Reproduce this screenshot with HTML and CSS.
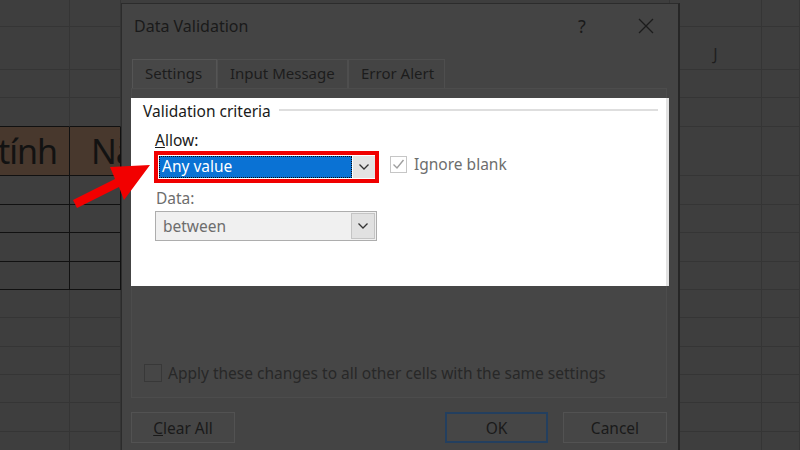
FILE: index.html
```html
<!DOCTYPE html>
<html>
<head>
<meta charset="utf-8">
<title>Data Validation</title>
<link rel="stylesheet" href="styles.css">
</head>
<body>
<div class="sheet">
  <div class="c"></div><div class="c"></div><div class="c"></div><div class="c"></div><div class="c"></div>
  <div class="c"></div><div class="c"></div><div class="c"></div><div class="c colh">J</div><div class="c"></div>
  <div class="c"></div><div class="c"></div><div class="c"></div><div class="c"></div><div class="c"></div>
  <div class="c bb"></div><div class="c bb"></div><div class="c"></div><div class="c"></div><div class="c"></div>
  <div class="c tb hd hd-r"><span>tính</span></div><div class="c tb hd hd-l"><span>Nă</span></div><div class="c"></div><div class="c"></div><div class="c"></div>
  <div class="c tb"></div><div class="c tb"></div><div class="c"></div><div class="c"></div><div class="c"></div>
  <div class="c tb"></div><div class="c tb"></div><div class="c"></div><div class="c"></div><div class="c"></div>
  <div class="c tb"></div><div class="c tb"></div><div class="c"></div><div class="c"></div><div class="c"></div>
  <div class="c tb"></div><div class="c tb"></div><div class="c"></div><div class="c"></div><div class="c"></div>
  <div class="c"></div><div class="c"></div><div class="c"></div><div class="c"></div><div class="c"></div>
  <div class="c"></div><div class="c"></div><div class="c"></div><div class="c"></div><div class="c"></div>
  <div class="c"></div><div class="c"></div><div class="c"></div><div class="c"></div><div class="c"></div>
  <div class="c"></div><div class="c"></div><div class="c"></div><div class="c"></div><div class="c"></div>
  <div class="c"></div><div class="c"></div><div class="c"></div><div class="c"></div><div class="c"></div>
  <div class="c"></div><div class="c"></div><div class="c"></div><div class="c"></div><div class="c"></div>
</div>

<div class="dialog">
  <div class="titlebar">
    <span class="title">Data Validation</span>
    <span class="help">?</span>
    <svg class="close" width="16" height="16" viewBox="0 0 16 16"><path d="M1 1 L15 15 M15 1 L1 15" stroke="#1c1c1c" stroke-width="1.3" fill="none"/></svg>
  </div>
  <div class="tabs">
    <div class="tab tab-set active">Settings</div>
    <div class="tab tab-msg">Input Message</div>
    <div class="tab tab-err">Error Alert</div>
  </div>
  <div class="panel">
    <div class="hl">
      <div class="legend"><span>Validation criteria</span><i class="rule"></i></div>
      <div class="form">
        <div class="lbl"><u>A</u>llow:</div>
        <div class="row">
          <div class="redbox">
            <div class="combo">
              <div class="sel">Any value</div>
              <div class="btn"><svg width="12" height="8" viewBox="0 0 12 8"><path d="M1.5 1.5 L6 6 L10.5 1.5" stroke="#333" stroke-width="1.3" fill="none"/></svg></div>
            </div>
          </div>
          <div class="chk">
            <span class="box"><svg width="15" height="15" viewBox="0 0 15 15"><path d="M2.5 7.5 L6 11 L12.5 3" stroke="#9f9f9f" stroke-width="1.4" fill="none"/></svg></span>
            <span>Ignore blank</span>
          </div>
        </div>
        <div class="lbl dim">Data:</div>
        <div class="combo dis">
          <div class="val">between</div>
          <div class="btn"><svg width="12" height="8" viewBox="0 0 12 8"><path d="M1.5 1.5 L6 6 L10.5 1.5" stroke="#333" stroke-width="1.3" fill="none"/></svg></div>
        </div>
      </div>
    </div>
    <div class="apply"><span class="dbox"></span><span>Apply these changes to all other cells with the same settings</span></div>
  </div>
  <div class="buttons">
    <button class="b"><u>C</u>lear All</button>
    <span class="sp"></span>
    <button class="b ok">OK</button>
    <button class="b">Cancel</button>
  </div>
</div>

<svg class="arrow" width="800" height="450" viewBox="0 0 800 450">
  <polygon points="73,200 115,179 110,167 150,165 124,200 119,187 77,208" fill="#f20000"/>
</svg>
</body>
</html>
```

FILE: styles.css
```css
html, body {
  margin: 0;
  padding: 0;
}
body {
  width: 800px;
  height: 450px;
  overflow: hidden;
  position: relative;
  background: #3e3e3e;
  font-family: "Noto Sans", "DejaVu Sans", sans-serif;
}

/* spreadsheet background */
.sheet {
  display: grid;
  grid-template-columns: 70px 51px 549px 92px 38px;
  grid-template-rows: 27px 43px 28px 29px 49px 29px 28px 29px 28px 28px 29px 28px 28px 29px 27px;
}
.c {
  box-sizing: border-box;
  border-right: 1px solid #353535;
  border-bottom: 1px solid #353535;
}
.bb { border-bottom-color: #111; }
.tb { border-right-color: #111; border-bottom-color: #111; }
.hd {
  background: #48382d;
  font-size: 34px;
  letter-spacing: -1px;
  line-height: 48px;
  color: #121212;
  white-space: nowrap;
  overflow: hidden;
  display: flex;
}
.hd-r { justify-content: flex-end; padding-right: 12px; }
.hd-l { padding-left: 21px; }
.colh {
  display: flex;
  justify-content: center;
  align-items: flex-end;
  padding-bottom: 4px;
  font-size: 16px;
  color: #1e1e1e;
}

/* dialog window */
.dialog {
  position: absolute;
  left: 121px;
  top: 3px;
  width: 559px;
  height: 447px;
  overflow: hidden;
  box-sizing: border-box;
  background: #444444;
  border: 1px solid #2c2c2c;
  border-right: 2px solid #262626;
  border-bottom: none;
  display: flex;
  flex-direction: column;
  color: #1a1a1a;
}
.titlebar {
  height: 44px;
  flex: none;
  display: flex;
  align-items: center;
  padding-left: 12px;
}
.title { font-size: 16px; }
.help {
  margin-left: auto;
  font-size: 18px;
  width: 10px;
  margin-right: 50px;
}
.close { margin-right: 24px; }

.tabs {
  display: flex;
  flex: none;
  margin: 11px 0 0 10px;
  height: 29px;
}
.tab {
  box-sizing: border-box;
  height: 29px;
  line-height: 27px;
  padding-left: 12px;
  font-size: 15px;
  color: #1c1c1c;
  border: 1px solid #4e4e4e;
  border-bottom: none;
}
.tab-set { width: 85px; }
.tab-msg { width: 131px; }
.tab-err { width: 97px; }
.active { background: #474747; border-color: #555; }

.panel {
  flex: none;
  margin-left: 9px;
  width: 536px;
  height: 310px;
  box-sizing: border-box;
  border: 1px solid #4c4c4c;
  background: #464646;
  display: flex;
  flex-direction: column;
}
.hl {
  margin: 9px -3px 0 -1px;
  height: 188px;
  background: #fff;
  box-shadow: inset -3px 0 0 #e2e2e2;
}
.legend {
  height: 26px;
  display: flex;
  align-items: center;
  padding: 0 11px 0 12px;
  font-size: 15.5px;
  color: #1a1a1a;
}
.rule {
  flex: 1;
  height: 2px;
  background: #dedede;
  margin: -2px 0 0 8px;
}
.form { padding-left: 23px; }
.lbl {
  margin-top: 6px;
  line-height: 20px;
  font-size: 15.5px;
  color: #1a1a1a;
  padding-left: 1px;
}
.lbl.dim { margin-top: 5px; color: #6d6d6d; padding-left: 2px; }
.row {
  display: flex;
  align-items: flex-start;
  margin-top: 1px;
}
.redbox {
  width: 225px;
  height: 32px;
  box-sizing: border-box;
  border: 4px solid #f00000;
  background: #fff;
}
.combo {
  display: flex;
  height: 24px;
  box-sizing: border-box;
  padding: 1px 0 1px 1px;
}
.sel {
  flex: 1;
  background: #0a72d4;
  color: #fff;
  font-size: 15.5px;
  line-height: 20px;
  padding-left: 3px;
  outline: 1px dotted #0d0d0d;
  outline-offset: -1px;
}
.btn {
  width: 22px;
  margin-left: 1px;
  background: #e3e3e3;
  display: flex;
  align-items: center;
  justify-content: center;
}
.chk {
  display: flex;
  align-items: center;
  margin: 2px 0 0 11px;
  font-size: 15.5px;
  color: #6d6d6d;
}
.box {
  width: 17px;
  height: 17px;
  box-sizing: border-box;
  border: 1px solid #c6c6c6;
  margin-right: 7px;
  display: flex;
  align-items: center;
  justify-content: center;
}
.combo.dis {
  margin-top: 3px;
  margin-left: 1px;
  width: 222px;
  height: 30px;
  border: 1px solid #adadad;
  background: #f0f0f0;
  padding: 1px;
}
.val {
  flex: 1;
  line-height: 26px;
  padding-left: 6px;
  font-size: 15.5px;
  color: #6d6d6d;
}
.dis .btn {
  border: 1px solid #c4c4c4;
  background: #e1e1e1;
}

.apply {
  margin-top: auto;
  padding: 0 0 13px 12px;
  display: flex;
  align-items: center;
  font-size: 15.5px;
  color: #282828;
}
.dbox {
  width: 18px;
  height: 18px;
  box-sizing: border-box;
  border: 1px solid #383838;
  margin-right: 6px;
}

.buttons {
  display: flex;
  flex: none;
  margin-top: 14px;
  padding: 0 11px 0 9px;
  gap: 15px;
}
.sp { flex: 1; }
.b {
  width: 104px;
  height: 31px;
  box-sizing: border-box;
  background: #464646;
  border: 1px solid #525252;
  font-family: inherit;
  font-size: 15.5px;
  color: #1a1a1a;
  padding: 0;
}
.ok {
  width: 103px;
  border: 2px solid #233f5f;
}

.arrow {
  position: absolute;
  left: 0;
  top: 0;
  pointer-events: none;
}
```
